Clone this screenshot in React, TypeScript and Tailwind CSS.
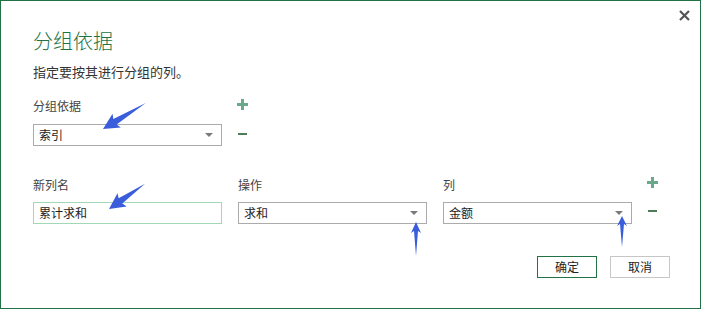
const font = { fontFamily: '"Microsoft YaHei", "Noto Sans CJK SC", "Noto Sans", sans-serif' };

const Plus = () => (
  <svg width="11" height="11" viewBox="0 0 11 11" className="block">
    <rect x="4" y="0" width="3" height="11" fill="#6aa88b" />
    <rect x="0" y="4" width="11" height="3" fill="#6aa88b" />
  </svg>
);

const Minus = () => <div className="w-[9px] h-[2px] bg-[#4d7d58]" />;

const Caret = () => (
  <svg width="8" height="4" viewBox="0 0 8 4" className="block">
    <polygon points="0,0 8,0 4,4" fill="#7a7a7a" />
  </svg>
);

const Select = ({ value }: { value: string }) => (
  <div className="w-[189px] h-[22px] border border-[#ababab] flex items-center justify-between pl-[5px] pr-[8px] text-[12px] text-[#222]">
    <span>{value}</span>
    <Caret />
  </div>
);

// blue annotation arrow, tip at (0,0) pointing +x in local coords
const Arrow = ({ x, y, angle, len, head, half }: { x: number; y: number; angle: number; len: number; head: number; half: number }) => (
  <polygon
    points={`0,0 ${-head},${-half} ${-head + 2},${-half / 2.5} ${-len},0 ${-head + 2},${half / 2.5} ${-head},${half}`}
    fill="#3a5edb"
    transform={`translate(${x} ${y}) rotate(${angle})`}
  />
);

export default function App() {
  return (
    <div className="relative w-[701px] h-[309px] bg-white border border-[#217346] pl-[32px] pt-[29px]" style={font}>
      <button className="absolute right-[10px] top-[8px] w-[12px] h-[12px] flex items-center justify-center">
        <svg width="11" height="11" viewBox="0 0 11 11">
          <path d="M1 1 L10 10 M10 1 L1 10" stroke="#555" strokeWidth="2.2" />
        </svg>
      </button>

      <h1 className="text-[20px] leading-[22px] font-light text-[#217346]">分组依据</h1>
      <p className="mt-[11px] text-[13px] leading-[18px] text-[#333]">指定要按其进行分组的列。</p>

      <div className="mt-[16px] flex gap-[14px]">
        <div className="w-[189px]">
          <div className="text-[12px] leading-[18px] text-[#444]">分组依据</div>
          <div className="mt-[9px]">
            <Select value="索引" />
          </div>
        </div>
        <div className="w-[12px] flex flex-col items-center">
          <div className="mt-[2px]">
            <Plus />
          </div>
          <div className="mt-[23px]">
            <Minus />
          </div>
        </div>
      </div>

      <div className="mt-[30px] flex">
        <div className="w-[189px]">
          <div className="text-[12px] leading-[18px] text-[#444]">新列名</div>
          <div className="mt-[8px] w-[189px] h-[22px] border border-[#a3d8b7] flex items-center pl-[5px] text-[12px] text-[#222]">
            累计求和
          </div>
        </div>
        <div className="w-[189px] ml-[16px]">
          <div className="text-[12px] leading-[18px] text-[#444]">操作</div>
          <div className="mt-[8px]">
            <Select value="求和" />
          </div>
        </div>
        <div className="w-[189px] ml-[16px]">
          <div className="text-[12px] leading-[18px] text-[#444]">列</div>
          <div className="mt-[8px]">
            <Select value="金额" />
          </div>
        </div>
        <div className="w-[12px] ml-[14px] flex flex-col items-center">
          <div className="mt-[1px]">
            <Plus />
          </div>
          <div className="mt-[22px]">
            <Minus />
          </div>
        </div>
      </div>

      <div className="mt-[32px] pr-[30px] flex justify-end gap-[13px]">
        <button className="w-[60px] h-[22px] border border-[#217346] text-[12px] text-[#222] flex items-center justify-center">确定</button>
        <button className="w-[60px] h-[22px] border border-[#c6c6c6] text-[12px] text-[#222] flex items-center justify-center">取消</button>
      </div>

      <svg className="absolute left-0 top-0 pointer-events-none" width="701" height="309">
        <Arrow x={102} y={128} angle={148.8} len={50} head={16} half={8} />
        <Arrow x={108} y={208} angle={145} len={44} head={16} half={8} />
        <Arrow x={415} y={221} angle={-90} len={34} head={11} half={5} />
        <Arrow x={621} y={215} angle={-90} len={31} head={10} half={5} />
      </svg>
    </div>
  );
}
